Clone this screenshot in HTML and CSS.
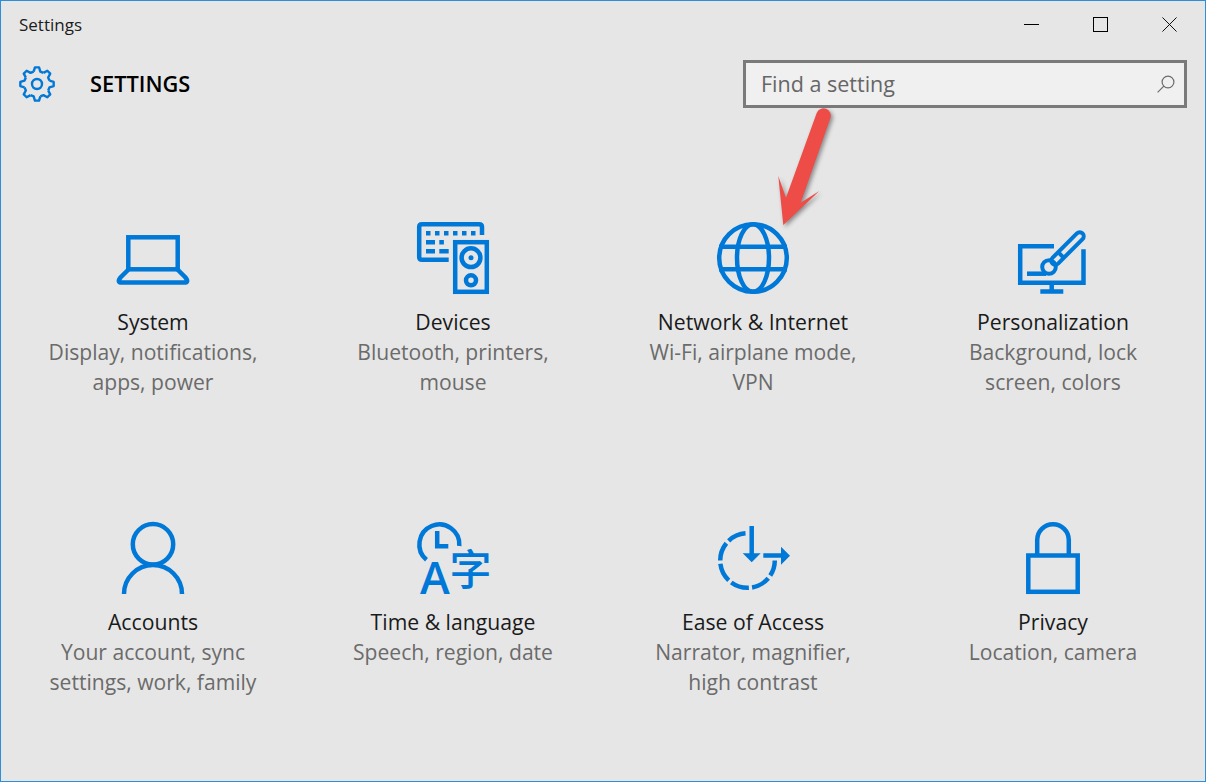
FILE: index.html
```html
<!DOCTYPE html>
<html lang="en">
<head>
<meta charset="utf-8">
<title>Settings</title>
<link rel="stylesheet" href="styles.css">
</head>
<body>
<div class="window">
  <div class="titlebar">
    <span class="wintitle">Settings</span>
    <div class="controls">
      <span class="ctl"><span class="min"></span></span>
      <span class="ctl"><span class="max"></span></span>
      <span class="ctl"><svg class="close" viewBox="0 0 16 16"><path d="M.5.5l15 15M15.5.5l-15 15"/></svg></span>
    </div>
  </div>
  <header class="head">
    <svg class="gear" viewBox="-20 -20 40 40">
      <g>
        <path d="M-3.34-12.46L-2.05-16.67H2.05L3.34-12.46L6.45-11.17"/>
        <path transform="rotate(45)" d="M-3.34-12.46L-2.05-16.67H2.05L3.34-12.46L6.45-11.17"/>
        <path transform="rotate(90)" d="M-3.34-12.46L-2.05-16.67H2.05L3.34-12.46L6.45-11.17"/>
        <path transform="rotate(135)" d="M-3.34-12.46L-2.05-16.67H2.05L3.34-12.46L6.45-11.17"/>
        <path transform="rotate(180)" d="M-3.34-12.46L-2.05-16.67H2.05L3.34-12.46L6.45-11.17"/>
        <path transform="rotate(225)" d="M-3.34-12.46L-2.05-16.67H2.05L3.34-12.46L6.45-11.17"/>
        <path transform="rotate(270)" d="M-3.34-12.46L-2.05-16.67H2.05L3.34-12.46L6.45-11.17"/>
        <path transform="rotate(315)" d="M-3.34-12.46L-2.05-16.67H2.05L3.34-12.46L6.45-11.17"/>
      </g>
      <circle r="5"/>
    </svg>
    <h1 class="apptitle">SETTINGS</h1>
    <div class="search">
      <span class="placeholder">Find a setting</span>
      <svg class="lens" viewBox="0 0 18 18"><circle cx="11" cy="7" r="5.9"/><path d="M6.8 11.2L.6 17.4"/></svg>
    </div>
  </header>

  <main class="grid">
    <section class="tile">
      <svg class="ico" viewBox="0 0 80 72"><rect x="15.3" y="15.3" width="49.4" height="32"/><path d="M16 47L7.5 55.5Q3.5 60.5 9 60.5H71Q76.5 60.5 72.5 55.5L64 47"/></svg>
      <h2>System</h2>
      <p>Display, notifications,<br>apps, power</p>
    </section>
    <section class="tile">
      <svg class="ico" viewBox="0 0 80 72">
        <path d="M69 13V5Q69 2.2 66 2.2H9Q6.2 2.2 6.2 5V35Q6.2 37.8 9 37.8H35.7"/>
        <path class="fill" d="M13 9h4.5v4.6H13zM22 9h4.5v4.6H22zM31 9h4.5v4.6H31zM40 9h4.5v4.6H40zM49 9h4.5v4.6H49zM58 9h4.5v4.6H58zM13 18h9v4.6H13zM26.3 18h4.6v4.6h-4.6zM13 27h9v4.6H13zM26.3 27h9.4v4.6h-9.4z"/>
        <rect x="42.2" y="20.2" width="31.6" height="49.6"/>
        <circle cx="58" cy="35.7" r="9.4"/><circle class="fill" cx="58" cy="35.7" r="2.5"/>
        <circle cx="58" cy="58.3" r="5"/>
      </svg>
      <h2>Devices</h2>
      <p>Bluetooth, printers,<br>mouse</p>
    </section>
    <section class="tile">
      <svg class="ico" viewBox="0 0 80 72"><circle cx="40" cy="36" r="33.8"/><ellipse cx="40" cy="36" rx="16" ry="33.8"/><path d="M6 24.7H74M6 47.3H74"/></svg>
      <h2>Network &amp; Internet</h2>
      <p>Wi-Fi, airplane mode,<br>VPN</p>
    </section>
    <section class="tile">
      <svg class="ico" viewBox="0 0 80 72">
        <path d="M41 24.2H7.2V60.8H70.5V27.3"/>
        <path d="M38.7 61V69.5M27.3 69.5H50.3"/>
        <rect class="thin" x="33.2" y="22.5" width="42.6" height="8" rx="4" transform="rotate(-45 54.5 26.5)"/>
        <path class="thin" d="M45.2 30.2L50.8 35.8"/>
        <circle class="thin" cx="36" cy="45" r="6.8"/>
        <path d="M14 51.7H33"/>
      </svg>
      <h2>Personalization</h2>
      <p>Background, lock<br>screen, colors</p>
    </section>
    <section class="tile">
      <svg class="ico" viewBox="0 0 80 72"><circle cx="40" cy="22.3" r="20.2"/><path d="M11 72A29 29 0 0 1 69 72"/></svg>
      <h2>Accounts</h2>
      <p>Your account, sync<br>settings, work, family</p>
    </section>
    <section class="tile">
      <svg class="ico" viewBox="0 0 80 72">
        <path d="M46.3 24A20 20 0 1 0 13.5 37.8"/>
        <path d="M24.2 9V24.2H35.3"/>
        <text class="ga" x="22" y="72">A</text>
        <text class="gz" x="36.5" y="63">字</text>
      </svg>
      <h2>Time &amp; language</h2>
      <p>Speech, region, date</p>
    </section>
    <section class="tile">
      <svg class="ico" viewBox="0 0 80 72">
        <path d="M32.5 11.3A27.3 27.3 0 1 0 61.8 38.6" stroke-dasharray="18.7 3.3"/>
        <path d="M38.7 4V32M50.3 33.6H69"/>
        <path class="fill" d="M29.7 31.3H47.7L38.7 40.3zM68 24.7L77 33.7L68 42.7z"/>
      </svg>
      <h2>Ease of Access</h2>
      <p>Narrator, magnifier,<br>high contrast</p>
    </section>
    <section class="tile">
      <svg class="ico" viewBox="0 0 80 72"><rect x="15.3" y="33.5" width="49.4" height="36.3"/><path d="M24.2 33V18A15.8 15.8 0 0 1 55.8 18V33"/></svg>
      <h2>Privacy</h2>
      <p>Location, camera</p>
    </section>
  </main>

  <svg class="arrow" viewBox="770 105 70 130"><path d="M816.7 113A7 7 0 0 1 830.3 118.3L800.7 202.7L819.3 191L783.3 225L778.3 176L786 197.7Z"/></svg>
</div>
</body>
</html>
```
FILE: styles.css
```css
* { box-sizing: border-box; }
html, body { margin: 0; height: 100%; }
body { font-family: "Open Sans", "Liberation Sans", sans-serif; background: #e6e6e6; }

.window {
  position: relative;
  height: 782px;
  border: 1px solid #2b8fdc;
  background: #e6e6e6;
  overflow: hidden;
}

.titlebar {
  display: flex;
  justify-content: space-between;
  align-items: center;
  height: 47px;
  padding-left: 18px;
}
.wintitle { font-size: 17px; color: #1c1c1c; }
.controls { display: flex; align-items: center; padding-right: 1px; }
.ctl { width: 69px; height: 47px; display: flex; align-items: center; justify-content: center; }
.min { display: block; width: 15px; height: 1px; background: #000; }
.max { display: block; width: 15px; height: 15px; border: 1px solid #000; }
.close { display: block; width: 15px; height: 15px; fill: none; stroke: #000; stroke-width: 1; }

.head {
  display: flex;
  align-items: center;
  height: 72px;
  padding: 0 18px;
}
.gear { width: 40px; height: 40px; margin-left: -2px; fill: none; stroke: #0078d7; stroke-width: 2.4; stroke-linejoin: round; }
.apptitle { margin: 0 0 0 33px; font-size: 21.8px; font-weight: 600; color: #000; line-height: 1; }
.search {
  margin-left: auto;
  width: 444px;
  height: 48px;
  border: 3px solid #7a7a7a;
  background: #f0f0f0;
  display: flex;
  align-items: center;
  justify-content: space-between;
  padding: 0 9px 0 15px;
}
.placeholder { font-size: 21.5px; color: #666; margin-bottom: 2px; }
.lens { width: 18px; height: 18px; fill: none; stroke: #6b6b6b; stroke-width: 1.2; }

.grid {
  display: grid;
  grid-template-columns: repeat(4, 300px);
  grid-auto-rows: 300px;
  margin: 102px 0 0 2px;
}
.tile { display: flex; flex-direction: column; align-items: center; text-align: center; }
.ico { display: block; width: 80px; height: 72px; fill: none; stroke: #0078d7; stroke-width: 4.5; overflow: visible; }
.ico .fill { fill: #0078d7; stroke: none; }
.ico .thin { stroke-width: 4; }
.ico .ga { font-family: "Open Sans", sans-serif; font-size: 45px; font-weight: 600; fill: #0078d7; stroke: none; text-anchor: middle; }
.ico .gz { font-family: "Noto Sans CJK SC", sans-serif; font-size: 42px; font-weight: 500; fill: #0078d7; stroke: none; }
.tile h2 { margin: 13px 0 0; font-size: 21.2px; font-weight: 400; line-height: 30px; color: #1a1a1a; }
.tile p { margin: 0; font-size: 21.1px; line-height: 30px; color: #6b6b6b; }

.arrow {
  position: absolute;
  left: 769px;
  top: 104px;
  width: 70px;
  height: 130px;
  filter: drop-shadow(2px 2px 2px rgba(0, 0, 0, .4));
}
.arrow path { fill: #ee4c46; }
```
